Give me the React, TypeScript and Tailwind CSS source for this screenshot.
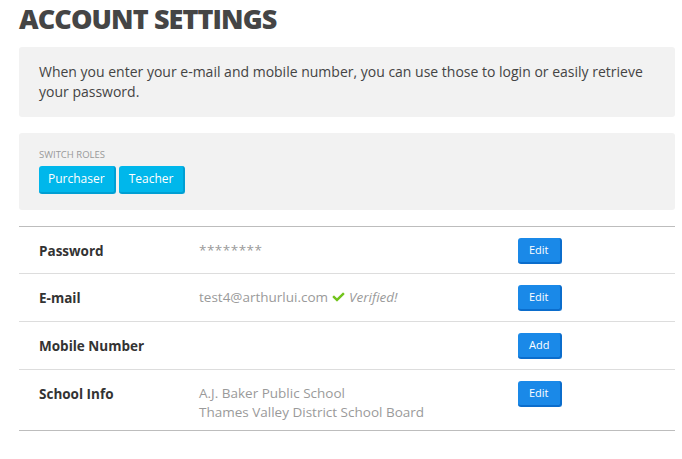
import React from 'react';

const rows = [
  { label: 'Password', action: 'Edit' },
  { label: 'E-mail', action: 'Edit' },
  { label: 'Mobile Number', action: 'Add' },
  { label: 'School Info', action: 'Edit' },
];

function Check() {
  return (
    <svg viewBox="0 0 512 512" className="inline-block w-[13px] h-[12px] mx-[4px] -mt-[2px] align-middle fill-[#72c41c]">
      <path d="M173.898 439.404l-166.4-166.4c-9.997-9.997-9.997-26.206 0-36.204l36.203-36.204c9.997-9.998 26.207-9.998 36.204 0L192 312.69 432.095 72.596c9.997-9.997 26.207-9.997 36.204 0l36.203 36.204c9.997 9.997 9.997 26.206 0 36.204l-294.4 294.401c-9.998 9.997-26.207 9.997-36.204-.001z" />
    </svg>
  );
}

function RowValue({ label }: { label: string }) {
  if (label === 'Password') return <span className="tracking-[0.5px]">********</span>;
  if (label === 'E-mail')
    return (
      <span>
        test4@arthurlui.com
        <Check />
        <em className="italic">Verified!</em>
      </span>
    );
  if (label === 'School Info')
    return (
      <>
        A.J. Baker Public School
        <br />
        Thames Valley District School Board
      </>
    );
  return null;
}

export default function App() {
  return (
    <div className="bg-white min-h-[459px] px-[19px] text-[#444]" style={{ fontFamily: '"Open Sans", "Liberation Sans", sans-serif' }}>
      {/* Heading */}
      <h1 className="pt-[5px] mb-[14px] text-[27px] leading-[28px] font-extrabold tracking-[-0.9px] text-[#454545] w-[656px]">
        ACCOUNT SETTINGS
      </h1>

      {/* Info box */}
      <div className="w-[656px] bg-[#f2f2f2] rounded-[3px] px-[20px] py-[15px] text-[14px] leading-[20px] text-[#444]">
        When you enter your e-mail and mobile number, you can use those to login or easily retrieve your password.
      </div>

      {/* Switch roles */}
      <div className="w-[656px] mt-[16px] bg-[#f2f2f2] rounded-[3px] px-[20px] pt-[16px] pb-[16px]">
        <div className="text-[9.5px] leading-[12px] text-[#999] uppercase">Switch Roles</div>
        <div className="flex gap-[3px] mt-[5px]">
          <button className="h-[28px] px-[9px] bg-[#00b7eb] border-b-2 border-r-2 border-[#009fd3] rounded-[3px] text-white text-[12px] leading-[26px]">
            Purchaser
          </button>
          <button className="h-[28px] px-[10px] bg-[#00b7eb] border-b-2 border-r-2 border-[#009fd3] rounded-[3px] text-white text-[12px] leading-[26px]">
            Teacher
          </button>
        </div>
      </div>

      {/* Account table */}
      <div className="w-[656px] mt-[16px] border-t border-b border-[#bdbdbd]">
        {rows.map((r, i) => (
          <div
            key={r.label}
            className={`flex items-start pl-[20px] pt-[11px] ${i === 0 ? 'pb-[7px]' : 'pb-[8px]'} ${i < rows.length - 1 ? 'border-b border-[#dddddd]' : ''}`}
          >
            <div className="w-[160px] mt-[3px] text-[13.5px] leading-[20px] font-bold text-[#333]">{r.label}</div>
            <div className="w-[319px] mt-[3px] text-[13.5px] leading-[19px] text-[#9a9a9a]">
              <RowValue label={r.label} />
            </div>
            <button className="h-[26px] mb-[2px] px-[11px] bg-[#1a89e8] border-b-2 border-r-2 border-[#0b6dcc] rounded-[3px] text-white text-[11px] leading-[24px]">
              {r.action}
            </button>
          </div>
        ))}
      </div>
    </div>
  );
}
